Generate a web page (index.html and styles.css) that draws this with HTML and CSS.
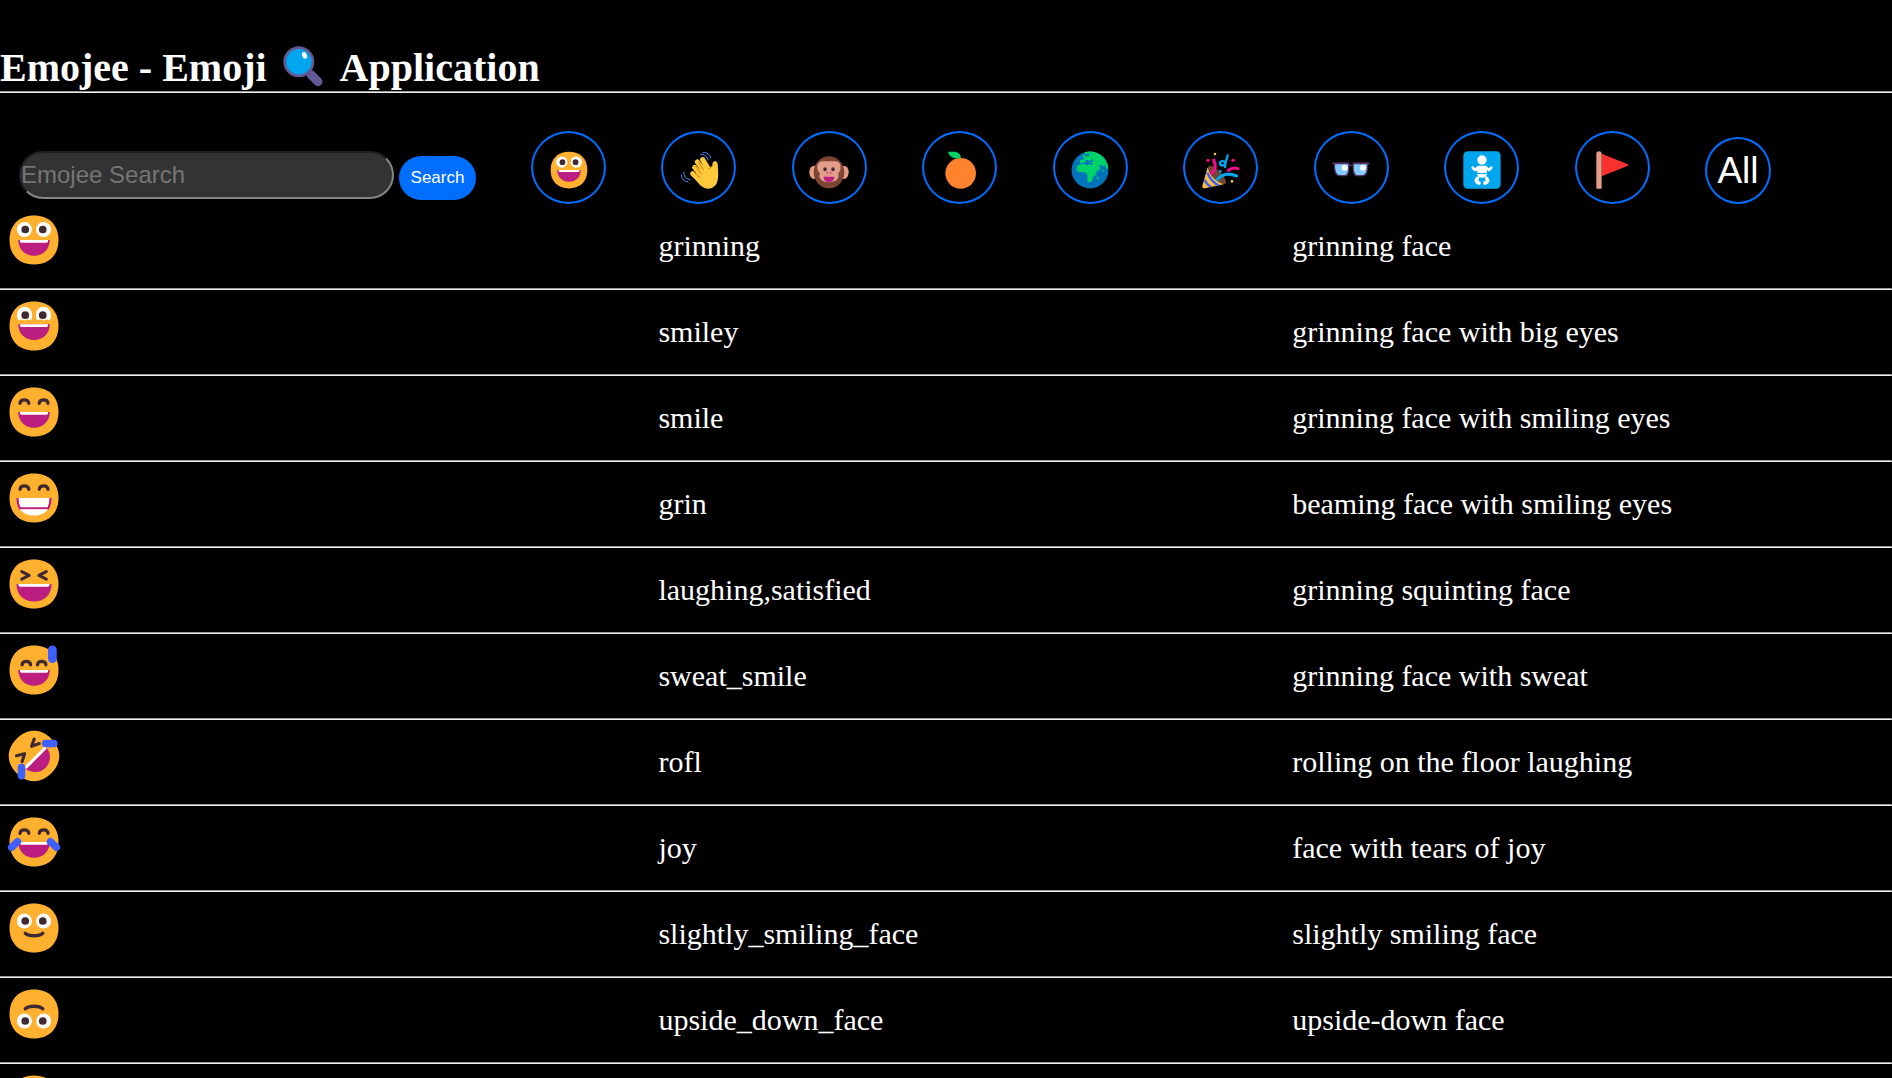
FILE: index.html
```html
<!DOCTYPE html>
<html lang="en">
<head>
<meta charset="utf-8">
<title>Emojee</title>
<link rel="stylesheet" href="styles.css">
</head>
<body>
<svg class="sprite" aria-hidden="true">
  <symbol id="face" viewBox="0 0 32 32"><path fill="#FFB02E" d="M16 30C24.600 30 30 24.600 30 16S24.600 2 16 2 2 7.400 2 16 7.400 30 16 30Z"/></symbol>
  <symbol id="eyes-open" viewBox="0 0 32 32"><g fill="#fff"><circle cx="10.500" cy="10" r="4.300"/><circle cx="21.500" cy="10" r="4.300"/></g><g fill="#402A32"><circle cx="11" cy="10" r="2.200"/><circle cx="21" cy="10" r="2.200"/></g></symbol>
  <symbol id="eyes-arc" viewBox="0 0 32 32"><path fill="none" stroke="#402A32" stroke-width="1.900" stroke-linecap="round" d="M8 11C8 8.400 13 8.400 13 11M19 11C19 8.400 24 8.400 24 11"/></symbol>
  <symbol id="mouth" viewBox="0 0 32 32"><path fill="#BB1D80" d="M7 16H25C25 21.200 21.200 25 16 25S7 21.200 7 16Z"/><path fill="#fff" d="M8 16H24V16.700Q24 17.500 23.200 17.500H8.800Q8 17.500 8 16.700Z"/></symbol>
  <symbol id="grinning" viewBox="0 0 32 32"><use href="#face"/><use href="#eyes-open"/><use href="#mouth"/></symbol>
</svg>

<h1 class="title">
  <span>Emojee - Emoji</span>
  <svg class="title-icon" viewBox="0 0 122 122" aria-hidden="true"><path d="M84 86L104 106" stroke="#635994" stroke-width="27" stroke-linecap="round"/><circle cx="47" cy="47" r="42" fill="#00A6ED" stroke="#635994" stroke-width="8"/><ellipse cx="64" cy="28" rx="7" ry="10" transform="rotate(-25 64 28)" fill="#fff"/></svg>
  <span>Application</span>
</h1>

<div class="toolbar">
  <form class="search">
    <input class="search-box" type="text" placeholder="Emojee Search" aria-label="Emojee Search">
    <button class="search-button" type="button">Search</button>
  </form>
  <nav class="categories" aria-label="Categories">
    <button class="category" type="button" aria-label="Smileys"><svg class="category-icon" viewBox="0 0 32 32"><use href="#grinning"/></svg></button>
    <button class="category" type="button" aria-label="People"><svg class="category-icon" viewBox="-63 -63 126 126">
      <g stroke="#FFC83D" stroke-width="15" stroke-linecap="round"><path d="M11-31L36 10M-5-24L25 15M-13-8L15 25M-19 11L10 38"/><path d="M48-19L45 12"/></g>
      <path fill="#FFC83D" d="M-20 18L8-8L38-10L56-18C58 8 60 32 50 45C38 60 18 59 3 45Z"/>
      <path fill="none" stroke="#D67D00" stroke-width="3" stroke-linecap="round" d="M-1-23L13 0M-10-10L8 12M-16 5L1 21M41-15C38-8 34-5 29-4"/>
      <path fill="none" stroke="#5092FF" stroke-width="3" stroke-linecap="round" d="M12-52C24-54 34-46 35-37M5-46C17-49 26-39 27-30M-53 15C-53 27-44 36-34 35M-46 7C-46 20-37 29-27 28"/></svg></button>
    <button class="category" type="button" aria-label="Animals"><svg class="category-icon" viewBox="-63 -63 126 126">
      <g fill="#E39D89"><ellipse cx="-45" cy="7" rx="14" ry="20"/><ellipse cx="45" cy="7" rx="14" ry="20"/></g><ellipse cy="7" rx="46" ry="48" fill="#7D4533"/>
      <path fill="#E39D89" d="M-18-26H18C30-26 35-18 35-8C35 0 32 6 27 10C34 25 20 37 0 37S-34 25-27 10C-32 6-35 0-35-8C-35-18-30-26-18-26Z"/>
      <g fill="#402A32"><ellipse cx="-12" cy="-2" rx="5" ry="6"/><ellipse cx="12" cy="-2" rx="5" ry="6"/></g><path fill="#BB1D80" d="M-8 7H-2L-4 12ZM8 7H2L4 12ZM-16 20H16C16 30 9 36 0 36S-16 30-16 20Z"/></svg></button>
    <button class="category" type="button" aria-label="Food"><svg class="category-icon" viewBox="-63 -63 126 126">
      <circle cx="2" cy="10" r="46" fill="#FF822D"/><path fill="#00D26A" d="M-36-55H-20C-6-56 2-48 3-35H-10C-24-36-34-44-36-55Z"/></svg></button>
    <button class="category" type="button" aria-label="Travel"><svg class="category-icon" viewBox="-63 -63 126 126">
      <circle r="55.500" fill="#0074BA"/>
      <path fill="#00D26A" d="M-16-53C-6-56 8-57 20-52C42-43 54-24 55-5L48-3L46-14L38-11L31-15L25-13L32-7L27 1L20 4L17 16L9 20L7 31L2 37H-5L-8 31L-7 19L-13 7H-32L-40-1V-9L-34-16L-22-19L-15-17L-10-14L-1-17L6-14L8-21H-4L-8-27L-14-24L-20-21H-30V-31L-20-31L-17-37L-24-40L-20-47L-10-40L-4-45L-15-48ZM19 23L25 19V26L21 28ZM36-3L42 3L37 5Z"/><path fill="#0074BA" d="M-14-30H-6L-2-27L6-32L10-25L-3-22L-11-25ZM-4-50L-11-47L-8-41L-1-44Z"/></svg></button>
    <button class="category" type="button" aria-label="Activities"><svg class="category-icon" viewBox="-63 -63 126 126">
      <path fill="#6D4534" d="M-36-12C-24-19 12 14 15 35C17 48-7 40-24 23S-44-4-36-12Z"/>
      <path fill="#FCC23F" d="M-40-8L-56 48Q-57 57-48 55L11 42C-10 40-34 20-40-8Z"/>
      <path fill="none" stroke="#3F5FFF" stroke-width="7" d="M-41 7C-34 29-17 42-6 46M-49 29C-44 40-37 48-29 50"/>
      <path fill="none" stroke="#F70A8D" stroke-width="9" stroke-linecap="round" d="M-22-30C-15-15-15 0-28 11M22 1C31-6 42-8 51-4"/>
      <path fill="none" stroke="#00A6ED" stroke-width="9" stroke-linecap="round" d="M-12 29C4 11 26 9 47 18"/>
      <path fill="none" stroke="#00A6ED" stroke-width="7" stroke-linecap="round" d="M20-44C17-34 13-24 12-9M14-22C5-31-6-25-3-18S11-12 14-22"/>
      <g fill="#F70A8D"><circle cx="-39" cy="-29" r="5"/><circle cx="36" cy="-29" r="5"/></g><g fill="#FCC23F"><circle cx="-18" cy="-48" r="4"/><circle cx="33" cy="34" r="4"/></g><circle cx="-2" cy="4" r="4" fill="#00A6ED"/></svg></button>
    <button class="category" type="button" aria-label="Objects"><svg class="category-icon" viewBox="-63 -63 126 126">
      <path fill="#83CBFF" stroke="#533566" stroke-width="4" d="M-50-20H-7C-5 0-8 17-18 17H-36C-46 17-50 0-50-20ZM50-20H7C5 0 8 17 18 17H36C46 17 50 0 50-20Z"/><path stroke="#533566" stroke-width="5" d="M-56-20H-6M6-20H56"/><path stroke="#533566" stroke-width="4" d="M-8-14H8"/><circle cx="-19" cy="-7" r="9" fill="#fff"/><circle cx="36" cy="-7" r="9" fill="#fff"/></svg></button>
    <button class="category" type="button" aria-label="Symbols"><svg class="category-icon" viewBox="-63 -63 126 126">
      <rect x="-56" y="-56" width="112" height="112" rx="13" fill="#00A6ED"/><circle cy="-30" r="14" fill="#fff"/><path fill="#fff" d="M-12-13H12L16-5L14 9H-14L-16-5ZM-15 12H15L11 21Q0 25-11 21Z"/>
      <path fill="none" stroke="#fff" stroke-width="8" stroke-linecap="round" stroke-linejoin="round" d="M-13-7L-21 0L-28-7M13-7L21 0L28-7"/><path fill="none" stroke="#fff" stroke-width="11" stroke-linecap="round" d="M-14 25C-20 32-15 37-9 39M14 25C20 32 15 37 9 39"/></svg></button>
    <button class="category" type="button" aria-label="Flags"><svg class="category-icon" viewBox="-63 -63 126 126">
      <path fill="#F8312F" d="M-31-49L48-17Q50-15 48-13L-31 19Z"/><path fill="#E39D89" d="M-47 56V-48Q-47-56-39-56T-31-48V56Z"/></svg></button>
    <button class="category category-all" type="button">All</button>
  </nav>
</div>

<table class="emojis">
  <colgroup><col class="col-icon"><col class="col-alias"><col></colgroup>
  <tbody>
    <tr><td class="emoji"><svg class="emoji-icon" viewBox="0 0 32 32"><use href="#grinning"/></svg></td><td>grinning</td><td>grinning face</td></tr>
    <tr><td class="emoji"><svg class="emoji-icon" viewBox="0 0 32 32"><use href="#face"/><path fill="#fff" d="M6.300 9.700C6.300 3.500 14.900 3.500 14.900 9.700Q14.900 11.500 14.200 12.800Q12 11.800 10.500 13Q9 11.800 7 12.800Q6.300 11.500 6.300 9.700ZM17.100 9.700C17.100 3.500 25.700 3.500 25.700 9.700Q25.700 11.500 25 12.800Q23 11.800 21.500 13Q20 11.800 17.800 12.800Q17.100 11.500 17.100 9.700Z"/><g fill="#402A32"><circle cx="11" cy="9.800" r="2.200"/><circle cx="21" cy="9.800" r="2.200"/></g><use href="#mouth" y="-1"/></svg></td><td>smiley</td><td>grinning face with big eyes</td></tr>
    <tr><td class="emoji"><svg class="emoji-icon" viewBox="0 0 32 32"><use href="#face"/><use href="#eyes-arc"/><use href="#mouth"/></svg></td><td>smile</td><td>grinning face with smiling eyes</td></tr>
    <tr><td class="emoji"><svg class="emoji-icon" viewBox="0 0 32 32"><use href="#face"/><use href="#eyes-arc"/><path fill="#BB1D80" d="M6 16H26Q26 20 24.400 22.500H7.600Q6 20 6 16Z"/><path fill="#fff" d="M7.200 16H24.800Q24.800 19 23.800 21.300H8.200Q7.200 19 7.200 16ZM8 22.400H24C22.500 24.700 19.500 26 16 26S9.500 24.700 8 22.400Z"/></svg></td><td>grin</td><td>beaming face with smiling eyes</td></tr>
    <tr><td class="emoji"><svg class="emoji-icon" viewBox="0 0 32 32"><use href="#face"/><path fill="none" stroke="#402A32" stroke-width="1.800" stroke-linecap="round" stroke-linejoin="round" d="M9 8.900L13.200 11.100L9 13.200M23 8.900L18.800 11.100L23 13.200"/><path fill="#BB1D80" d="M6 16H26C26 22 22 26 16 26S6 22 6 16Z"/><path fill="#fff" d="M7 16H25Q25 17.500 24 17.500H8Q7 17.500 7 16Z"/></svg></td><td>laughing,satisfied</td><td>grinning squinting face</td></tr>
    <tr><td class="emoji"><svg class="emoji-icon" viewBox="0 0 32 32"><use href="#face"/><path fill="none" stroke="#402A32" stroke-width="1.900" stroke-linecap="round" d="M9.200 13C9.200 10.400 14 10.400 14 13M18 13C18 10.400 22.800 10.400 22.800 13"/><use href="#mouth"/><rect x="24" y="2" width="5" height="10" rx="2.500" fill="#3F5FFF"/></svg></td><td>sweat_smile</td><td>grinning face with sweat</td></tr>
    <tr><td class="emoji"><svg class="emoji-icon" viewBox="0 0 32 32"><g transform="rotate(-45 16 16)"><use href="#face"/></g><path fill="#BB1D80" d="M11 23L23 11A8.500 8.500 0 0 1 11 23Z"/><path stroke="#fff" stroke-width="1.700" stroke-linecap="round" d="M11.700 22.200L22.300 11.500"/><path fill="none" stroke="#402A32" stroke-width="1.800" stroke-linecap="round" stroke-linejoin="round" d="M6 15.900L10.600 14.700L9.200 19.200M16.100 6.300L14.600 10.500L19 8.900"/><g fill="#3F5FFF"><rect x="20.500" y="6.700" width="9" height="4.300" rx="2.100"/><rect x="6.700" y="20.400" width="4.300" height="9" rx="2.100"/></g></svg></td><td>rofl</td><td>rolling on the floor laughing</td></tr>
    <tr><td class="emoji"><svg class="emoji-icon" viewBox="0 0 32 32"><use href="#face"/><use href="#eyes-arc"/><use href="#mouth"/><path stroke="#3F5FFF" stroke-width="4.200" stroke-linecap="round" d="M3.200 19.100L6.600 15.800M28.800 19.100L25.400 15.800"/></svg></td><td>joy</td><td>face with tears of joy</td></tr>
    <tr><td class="emoji"><svg class="emoji-icon" viewBox="0 0 32 32"><use href="#face"/><use href="#eyes-open" y="2"/><path fill="none" stroke="#402A32" stroke-width="1.900" stroke-linecap="round" d="M11 19C13 20.900 19 20.900 21 19"/></svg></td><td>slightly_smiling_face</td><td>slightly smiling face</td></tr>
    <tr><td class="emoji"><svg class="emoji-icon" viewBox="0 0 32 32"><g transform="rotate(180 16 16)"><use href="#face"/><use href="#eyes-open" y="2"/><path fill="none" stroke="#402A32" stroke-width="1.900" stroke-linecap="round" d="M11 19C13 20.900 19 20.900 21 19"/></g></svg></td><td>upside_down_face</td><td>upside-down face</td></tr>
    <tr><td class="emoji"><svg class="emoji-icon" viewBox="0 0 32 32"><use href="#face"/></svg></td><td></td><td></td></tr>
  </tbody>
</table>
</body>
</html>
```

FILE: styles.css
```css
* {
  box-sizing: border-box;
}

body {
  margin: 0;
  height: 100vh;
  overflow: hidden;
  background: #000;
  color: #fff;
  font-family: "Liberation Serif", "Times New Roman", serif;
}

.sprite {
  display: none;
}

.title {
  display: flex;
  align-items: flex-start;
  gap: 16px;
  margin: 0;
  padding: 46px 0 3px;
  font-size: 40px;
  line-height: 44px;
  background: linear-gradient(#9a9a9a 50%, #eee 50%) bottom / 100% 2px no-repeat;
}

.title-icon {
  width: 41px;
  height: 41px;
}

.toolbar {
  display: flex;
  align-items: flex-end;
  gap: 55px;
  padding: 38px 121px 0 19px;
}

.search {
  display: flex;
  align-items: baseline;
  gap: 5px;
  margin-bottom: 4px;
}

.search-box {
  width: 375px;
  height: 48px;
  padding: 0;
  border: 2px solid;
  border-color: #212121 #858585 #858585 #212121;
  border-radius: 24px;
  background: #333;
  color: #fff;
  font: 24px "Liberation Sans", Arial, sans-serif;
}

.search-box::placeholder {
  color: #757575;
}

.search-button {
  width: 77px;
  height: 44px;
  padding: 0;
  border: 0;
  border-radius: 22px;
  background: #006eff;
  color: #fff;
  font: 17px "Liberation Sans", Arial, sans-serif;
}

.categories {
  display: flex;
  flex: 1;
  align-items: flex-end;
  justify-content: space-between;
}

.category {
  display: flex;
  align-items: center;
  justify-content: center;
  width: 75px;
  height: 73px;
  padding: 5px 0 0;
  border: 2px solid #006eff;
  border-radius: 50%;
  background: transparent;
  color: #fff;
}

.category-icon {
  width: 42px;
  height: 42px;
}

.category-all {
  width: 66px;
  height: 67px;
  padding: 0;
  font: 37px "Liberation Sans", Arial, sans-serif;
}

.emojis {
  width: 100%;
  table-layout: fixed;
  border-collapse: collapse;
  font-size: 30px;
  line-height: 34px;
}

.col-icon {
  width: 34.8%;
}

.col-alias {
  width: 33.5%;
}

.emojis tr {
  height: 86px;
  background: linear-gradient(#9a9a9a 50%, #eee 50%) bottom / 100% 2px no-repeat;
}

.emojis td {
  padding: 0 0 2px;
}

.emojis .emoji {
  padding: 8px 0 0 6px;
  vertical-align: top;
}

.emoji-icon {
  display: block;
  width: 56px;
  height: 56px;
}
```
